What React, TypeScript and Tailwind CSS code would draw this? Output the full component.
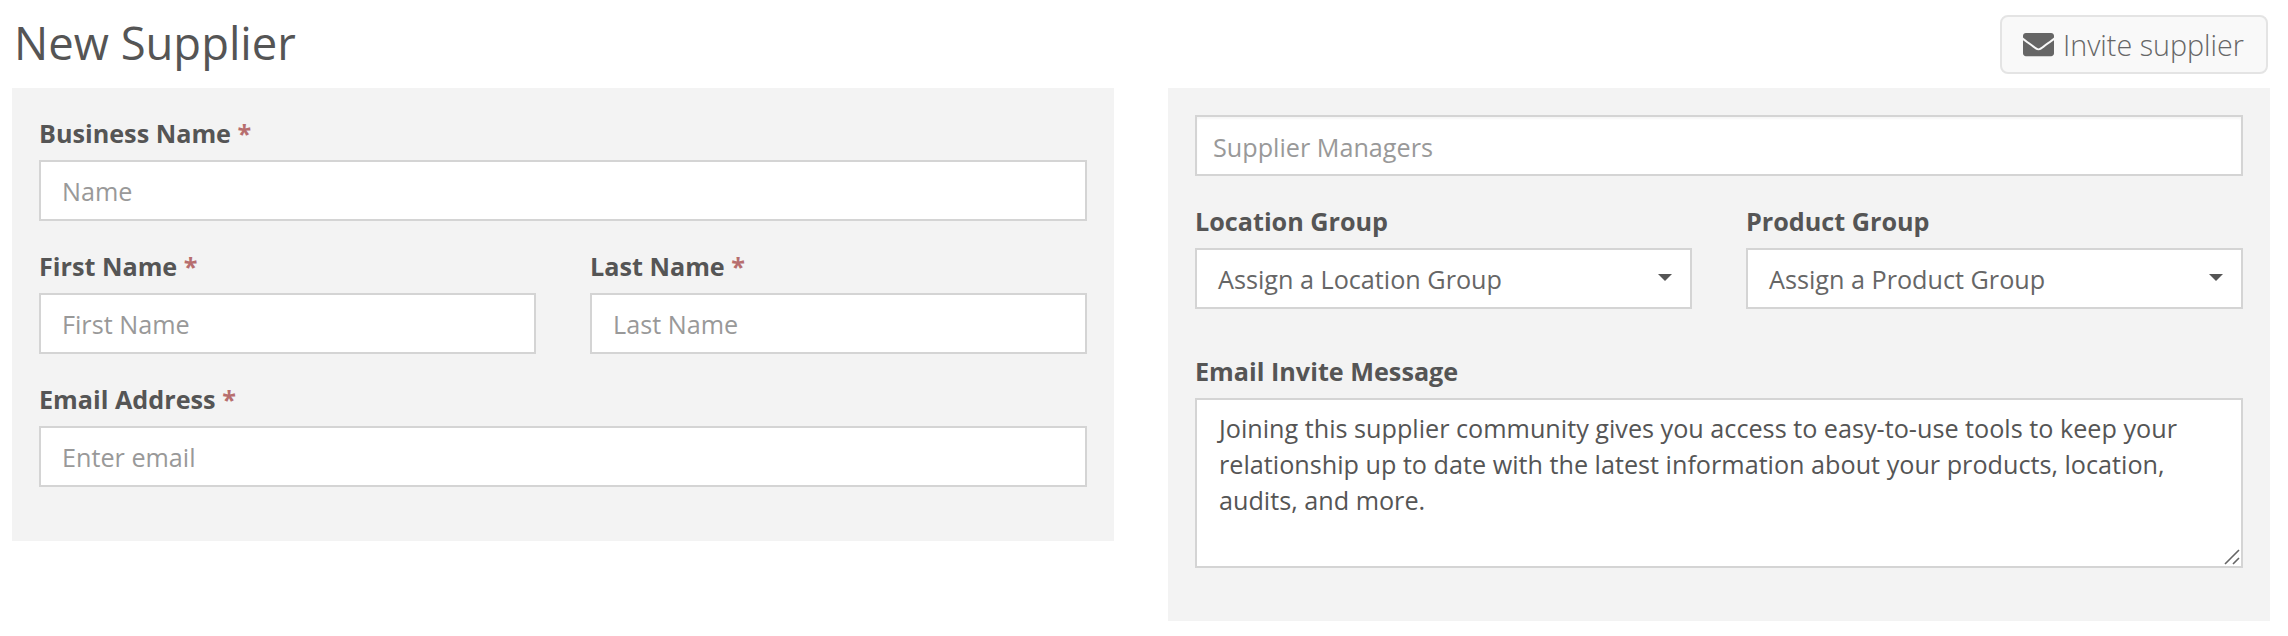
import React from 'react';
import { FaEnvelope } from 'react-icons/fa';

const inputClass =
  "block w-full h-[61px] bg-white border-2 border-[#d4d4d4] text-[25.2px] leading-[36px] text-[#555555] placeholder:text-[#999999] outline-none";
const labelClass = "block h-[36px] mb-[9px] text-[25.2px] leading-[36px] font-bold text-[#555555]";

function Required() {
  return <span className="text-[#b76e6e]"> *</span>;
}

function SelectBox({ label }: { label: string }) {
  return (
    <div className="flex items-center justify-between h-[61px] bg-white border-2 border-[#d4d4d4] pl-[21px] pr-[18px] text-[25.2px] text-[#666666]">
      <span className="mt-[2px]">{label}</span>
      <span className="w-0 h-0 border-x-[7px] border-x-transparent border-t-[7px] border-t-[#555555] mb-[3px]" />
    </div>
  );
}

export default function App() {
  return (
    <div className="w-[2288px] h-[636px] bg-white font-['Open_Sans',sans-serif] text-[#555555]">
      {/* Header */}
      <div className="flex items-start justify-between h-[88px] pl-[14px] pr-[20px]">
        <h1 className="mt-[17px] text-[45.4px] leading-[50px] font-normal">New Supplier</h1>
        <button className="flex items-center gap-[9px] mt-[15px] h-[59px] pl-[21px] pr-[22px] rounded-[8px] bg-[#f9f9f9] border-2 border-[#e4e4e4] text-[28.7px] font-light text-[#666666]">
          <FaEnvelope className="w-[31px] h-[31px]" />
          <span>Invite supplier</span>
        </button>
      </div>

      <div className="grid grid-cols-2 gap-[54px] items-start pl-[12px] pr-[18px]">
        {/* Left panel */}
        <div className="bg-[#f3f3f3] px-[27px] pt-[27px] pb-[27px]">
          <div className="mb-[27px]">
            <label className={labelClass}>Business Name<Required /></label>
            <input className={`${inputClass} px-[21px]`} placeholder="Name" />
          </div>
          <div className="grid grid-cols-2 gap-[54px] mb-[27px]">
            <div>
              <label className={labelClass}>First Name<Required /></label>
              <input className={`${inputClass} px-[21px]`} placeholder="First Name" />
            </div>
            <div>
              <label className={labelClass}>Last Name<Required /></label>
              <input className={`${inputClass} px-[21px]`} placeholder="Last Name" />
            </div>
          </div>
          <div className="mb-[27px]">
            <label className={labelClass}>Email Address<Required /></label>
            <input className={`${inputClass} px-[21px]`} placeholder="Enter email" />
          </div>
        </div>

        {/* Right panel */}
        <div className="bg-[#f3f3f3] px-[27px] pt-[27px] pb-[53px]">
          <input
            className={`${inputClass} pl-[16px] pr-[16px] pt-[3px] mb-[27px] shadow-[inset_0_2px_2px_rgba(0,0,0,0.04)]`}
            placeholder="Supplier Managers"
          />
          <div className="grid grid-cols-2 gap-[54px] mb-[44px]">
            <div>
              <label className={labelClass}>Location Group</label>
              <SelectBox label="Assign a Location Group" />
            </div>
            <div>
              <label className={labelClass}>Product Group</label>
              <SelectBox label="Assign a Product Group" />
            </div>
          </div>
          <label className={labelClass}>Email Invite Message</label>
          <div className="relative">
            <textarea
              className="block w-full h-[170px] bg-white border-2 border-[#d4d4d4] px-[22px] py-[10px] text-[25.2px] leading-[36px] text-[#555555] outline-none resize-none"
              defaultValue="Joining this supplier community gives you access to easy-to-use tools to keep your relationship up to date with the latest information about your products, location, audits, and more."
            />
            {/* resize grip */}
            <svg className="absolute right-[3px] bottom-[3px] w-[16px] h-[16px]" viewBox="0 0 16 16" fill="none">
              <path d="M1 15 L15 1 M9 15 L15 9" stroke="#666666" strokeWidth="1.6" />
            </svg>
          </div>
        </div>
      </div>
    </div>
  );
}
